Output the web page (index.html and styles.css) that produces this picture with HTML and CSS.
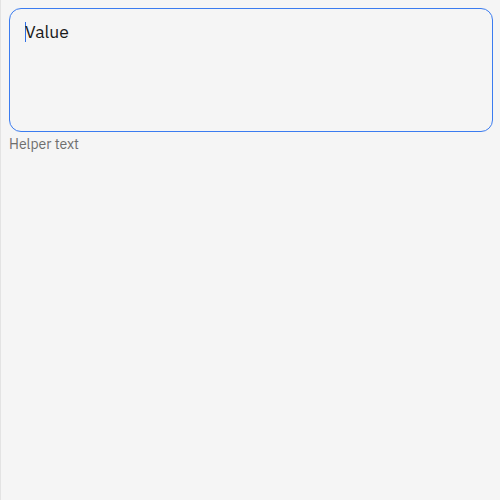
FILE: index.html
```html
<!DOCTYPE html>
<html>
<head>
<meta charset="utf-8">
<link rel="stylesheet" href="styles.css">
</head>
<body>
<div class="field">
  <div class="input"><span class="caret"></span>Value</div>
  <div class="helper">Helper text</div>
</div>
</body>
</html>
```
FILE: styles.css
```css
html { background: #f5f5f5; height: 100%; }
body {
  margin: 0;
  min-height: 100%;
  box-sizing: border-box;
  border-left: 1px solid #e3e3e3;
  padding: 8px 8px 0 8px;
  font-family: "IBM Plex Sans", sans-serif;
}
.field { display: flex; flex-direction: column; gap: 2px; }
.input {
  box-sizing: border-box;
  width: 484px;
  height: 124px;
  border: 1px solid #3b7cf0;
  border-radius: 12px;
  background: #f5f5f5;
  padding: 11px 15px;
  font-size: 17.5px;
  line-height: 24px;
  color: #1a1a1a;
}
.caret {
  display: inline-block;
  width: 1px;
  height: 20px;
  margin-right: -1px;
  background: #2f6fe6;
  vertical-align: -4px;
}
.helper {
  font-size: 14px;
  line-height: 20px;
  color: #6e6e6e;
}
```
